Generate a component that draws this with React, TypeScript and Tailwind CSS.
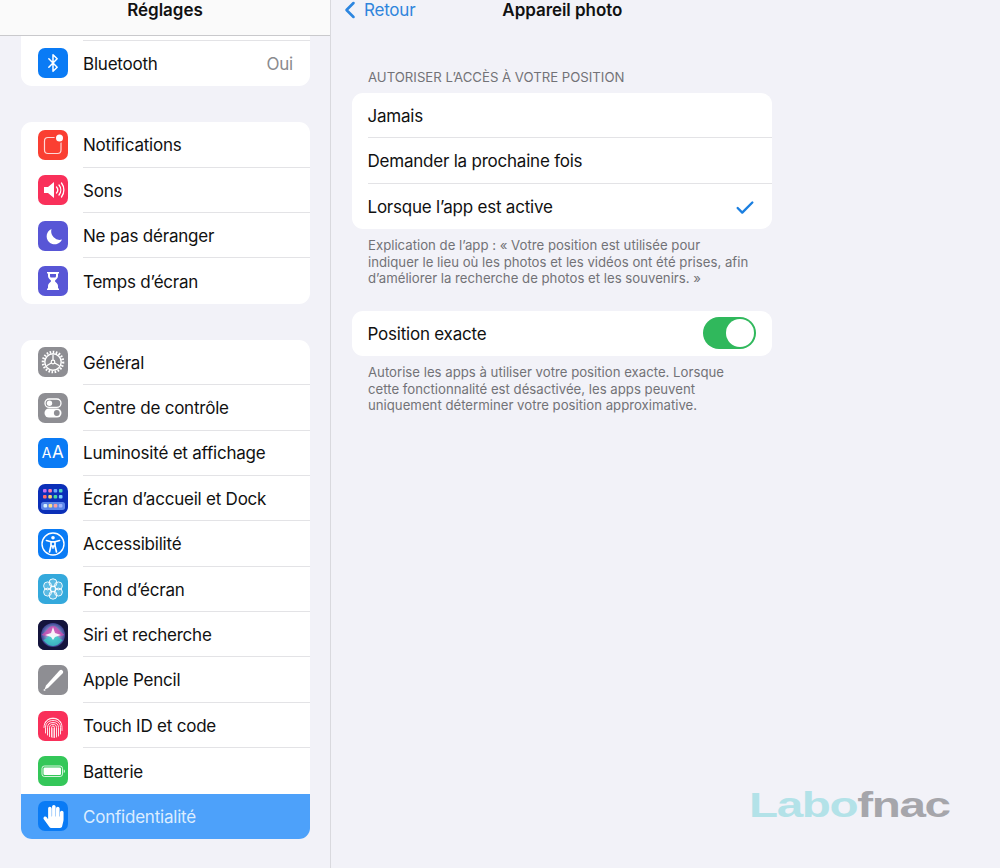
import React from "react";
import { Bluetooth, ChevronLeft, Check } from "lucide-react";
import { FaHandPaper } from "react-icons/fa";

type RowProps = {
  icon: React.ReactNode;
  bg: string;
  label: string;
  value?: string;
  last?: boolean;
  active?: boolean;
};

const NotificationIcon = () => (
  <svg viewBox="0 0 30 30" className="w-full h-full">
    <rect x="6.500" y="7.500" width="16.500" height="16" rx="3.500" fill="none" stroke="#fff" strokeOpacity="0.8" strokeWidth="1.200" />
    <circle cx="21.500" cy="8" r="5" fill="#fa3f32" />
    <circle cx="21.500" cy="8" r="3.500" fill="#fff" />
  </svg>
);

const SoundIcon = () => (
  <svg viewBox="0 0 30 30" className="w-full h-full">
    <path d="M6 12h4l6-5v16l-6-5H6z" fill="#fff" />
    <g fill="none" stroke="#fff" strokeWidth="1.300" strokeLinecap="round">
      <path d="M18.500 12a4.500 4.500 0 0 1 0 6" />
      <path d="M21 10a8 8 0 0 1 0 10" />
      <path d="M23.500 8a11.500 11.500 0 0 1 0 14" />
    </g>
  </svg>
);

const MoonIcon = () => (
  <svg viewBox="0 0 30 30" className="w-full h-full">
    <path d="M13.500 8a8 8 0 1 0 10.500 10.500A8.500 8.500 0 0 1 13.500 8z" fill="#fff" />
  </svg>
);

const HourglassIcon = () => (
  <svg viewBox="0 0 30 30" className="w-full h-full">
    <path d="M9 6h12v1.600h-1v2.600c0 2.200-2.600 3.400-3.200 4.800.6 1.400 3.200 2.600 3.200 4.800v2.600h1V24H9v-1.600h1v-2.600c0-2.200 2.600-3.400 3.200-4.800-.6-1.400-3.200-2.600-3.200-4.800V7.600H9z" fill="#fff" />
    <path d="M12 8h6v2c0 .6-.2 1-.6 1.400h-4.800C12.200 11 12 10.600 12 10z" fill="#5856d6" />
  </svg>
);

const GearIcon = () => (
  <svg viewBox="0 0 30 30" className="w-full h-full">
    <circle cx="15" cy="15" r="10" fill="none" stroke="#fff" strokeWidth="2.600" strokeDasharray="1.600 1.500" />
    <circle cx="15" cy="15" r="8.200" fill="none" stroke="#fff" strokeWidth="1.400" />
    <circle cx="15" cy="15" r="1.800" fill="none" stroke="#fff" strokeWidth="1.200" />
    <path d="M15 13V7.500M13.300 16 8.500 18.800M16.700 16 21.500 18.800" stroke="#fff" strokeWidth="1.300" />
  </svg>
);

const ToggleIcon = () => (
  <svg viewBox="0 0 30 30" className="w-full h-full">
    <rect x="7" y="6" width="16" height="8.400" rx="4.200" fill="none" stroke="#fff" strokeWidth="1.300" />
    <circle cx="11.500" cy="10.200" r="2.700" fill="#fff" />
    <rect x="6.500" y="15.500" width="17" height="9" rx="4.500" fill="#fff" />
    <circle cx="18.800" cy="20" r="2.900" fill="#8e8e93" />
  </svg>
);

const HomeIcon = () => {
  const top = ["#c56cf0", "#ff7aa8", "#6fa8ff", "#4fd6c0"];
  const mid = ["#ff6b6b", "#ffd166", "#4cd9a0", "#7fd0ff"];
  const dock = ["#d9f2ff", "#ffe08a", "#ff9d9d", "#9fb4ff"];
  return (
    <svg viewBox="0 0 30 30" className="w-full h-full">
      {top.map((c, i) => <rect key={c} x={5 + i * 5.300} y="5" width="3.600" height="3.600" rx="1" fill={c} />)}
      {mid.map((c, i) => <rect key={c} x={5 + i * 5.300} y="11" width="3.600" height="3.600" rx="1" fill={c} />)}
      <rect x="3" y="18" width="24" height="8" rx="2.500" fill="#5c86e8" />
      {dock.map((c, i) => <rect key={c} x={5.500 + i * 5.100} y="20" width="3.600" height="3.600" rx="1" fill={c} />)}
    </svg>
  );
};

const AccessIcon = () => (
  <svg viewBox="0 0 30 30" className="w-full h-full">
    <circle cx="15" cy="15" r="11" fill="none" stroke="#fff" strokeWidth="1.400" />
    <circle cx="15" cy="8.800" r="1.800" fill="#fff" />
    <path d="M8.500 11.500 13 12.800v4L11.500 23M21.500 11.500 17 12.800v4L18.500 23M13 12.800h4M13 17h4M15 17.500V19" fill="none" stroke="#fff" strokeWidth="1.700" strokeLinecap="round" strokeLinejoin="round" />
  </svg>
);

const FlowerIcon = () => (
  <svg viewBox="0 0 30 30" className="w-full h-full">
    <g fill="#fff" fillOpacity="0.2" stroke="#fff" strokeWidth="0.900">
      <circle cx="15" cy="8.800" r="4" />
      <circle cx="15" cy="21.200" r="4" />
      <circle cx="9.600" cy="11.900" r="4" />
      <circle cx="20.400" cy="11.900" r="4" />
      <circle cx="9.600" cy="18.100" r="4" />
      <circle cx="20.400" cy="18.100" r="4" />
      <circle cx="15" cy="15" r="3" />
    </g>
  </svg>
);

const SiriIcon = () => (
  <svg viewBox="0 0 30 30" className="w-full h-full">
    <defs>
      <radialGradient id="siriGlow" cx="50%" cy="50%" r="50%">
        <stop offset="0%" stopColor="#ffffff" />
        <stop offset="35%" stopColor="#a7c7e8" />
        <stop offset="100%" stopColor="#3a3f8f" />
      </radialGradient>
    </defs>
    <rect width="30" height="30" fill="#14143c" />
    <circle cx="15" cy="15" r="12" fill="url(#siriGlow)" />
    <path d="M3.500 15C9 11 11 6 15 6s6 5 11.500 9c-4.500 2-7 1-11.500 1S9 17 3.500 15z" fill="#d14bb0" fillOpacity="0.8" />
    <path d="M5 20c4-1 6-6 10-6s6 5 10 6c-3 3-6 6-10 6s-7-3-10-6z" fill="#36c9c6" fillOpacity="0.8" />
    <path d="M15 7l2 6 6 2-6 2-2 3-2-3-6-2 6-2z" fill="#fff" fillOpacity="0.9" />
  </svg>
);

const PencilIcon = () => (
  <svg viewBox="0 0 30 30" className="w-full h-full">
    <path d="M21.500 5.500c1.200-1 2.200-.8 3 0s1 1.800 0 3L10 23l-3.500 1.500L8 20.500z" fill="#fff" />
    <circle cx="6.500" cy="25" r="1" fill="#fff" fillOpacity="0.8" />
  </svg>
);

const TouchIcon = () => (
  <svg viewBox="0 0 30 30" className="w-full h-full">
    <g fill="none" stroke="#fff" strokeOpacity="0.9" strokeWidth="0.950" strokeLinecap="round">
      <path d="M7 12a9 9 0 0 1 16 0" />
      <path d="M6 16.500c0-6 4-9 9-9s9 3 9 9v3" />
      <path d="M7.500 22v-5.500c0-4.500 3.200-7 7.500-7s7.500 2.500 7.500 7V23" />
      <path d="M9.500 24v-7.500c0-3.400 2.400-5 5.500-5s5.500 1.600 5.500 5V25" />
      <path d="M11.500 25.500v-9c0-2 1.500-3.200 3.500-3.200s3.500 1.200 3.500 3.200V26" />
      <path d="M13.500 26v-9.500c0-.9.600-1.400 1.500-1.400s1.500.5 1.500 1.400V26.500" />
      <path d="M15 17v9.500" />
    </g>
  </svg>
);

const BatteryIcon = () => (
  <svg viewBox="0 0 30 30" className="w-full h-full">
    <rect x="4" y="10" width="20.500" height="10.500" rx="2.400" fill="none" stroke="#fff" strokeOpacity="0.8" strokeWidth="1" />
    <rect x="5.500" y="11.500" width="17.500" height="7.500" rx="1.300" fill="#fff" />
    <path d="M25.700 13.500c1 .3 1.300 1 1.300 1.800s-.3 1.500-1.300 1.800z" fill="#fff" fillOpacity="0.8" />
  </svg>
);

const SidebarRow = ({ icon, bg, label, value, last, active }: RowProps) => (
  <div className={`h-[45.400px] flex items-center pl-[17px] ${active ? "bg-[#4da1fa]" : ""}`}>
    <div className={`w-[30px] h-[30px] rounded-[7px] overflow-hidden flex items-center justify-center shrink-0 ${bg}`}>
      {icon}
    </div>
    <div className={`ml-[15px] flex-1 h-full flex items-center pt-[3px] pr-[17px] ${last || active ? "" : "border-b border-[#e3e3e6]"}`}>
      <span className={`flex-1 ${active ? "text-[#dcedff]" : "text-[#111]"}`}>{label}</span>
      {value && <span className="text-[#8a8a8e]">{value}</span>}
    </div>
  </div>
);

const OptionRow = ({ label, checked, last }: { label: string; checked?: boolean; last?: boolean }) => (
  <div className={`h-[45.400px] ml-[15.500px] flex items-center pt-[2.500px] pr-[16.500px] ${last ? "" : "border-b border-[#e3e3e6]"}`}>
    <span className="flex-1 text-[#111]">{label}</span>
    {checked && <Check size={22} strokeWidth={2.600} className="text-[#1b7fe0]" />}
  </div>
);

const App = () => {
  return (
    <div className="h-[868px] w-[1000px] overflow-hidden flex bg-[#f2f2f8] text-[17px] tracking-[-0.22px] font-['Inter','Liberation_Sans',sans-serif] relative">
      <aside className="w-[331px] shrink-0 border-r border-[#d9d9de] flex flex-col">
        <header className="h-[36px] shrink-0 border-b border-[#c9c9cc] bg-[#fafafa] flex justify-center">
          <h1 className="font-semibold text-[#111] text-[17px] tracking-[-0.05px] leading-[20px]">Réglages</h1>
        </header>
        <div className="flex flex-col pl-[21px] pr-[20px]">
          <section className="bg-white rounded-b-[11px] overflow-hidden">
            <div className="h-[4.800px] ml-[62px] border-b border-[#e3e3e6]"></div>
            <SidebarRow bg="bg-[#0a7bf5]" icon={<Bluetooth size={20} color="#fff" strokeWidth={1.800} />} label="Bluetooth" value="Oui" last />
          </section>
          <section className="bg-white rounded-[11px] overflow-hidden mt-[36px]">
            <SidebarRow bg="bg-[#fa3f32]" icon={<NotificationIcon />} label="Notifications" />
            <SidebarRow bg="bg-[#f9305a]" icon={<SoundIcon />} label="Sons" />
            <SidebarRow bg="bg-[#5856d6]" icon={<MoonIcon />} label="Ne pas déranger" />
            <SidebarRow bg="bg-[#5856d6]" icon={<HourglassIcon />} label="Temps d’écran" last />
          </section>
          <section className="bg-white rounded-[11px] overflow-hidden mt-[36px]">
            <SidebarRow bg="bg-[#8e8e93]" icon={<GearIcon />} label="Général" />
            <SidebarRow bg="bg-[#8e8e93]" icon={<ToggleIcon />} label="Centre de contrôle" />
            <SidebarRow bg="bg-[#0a7bf5]" icon={<span className="text-white text-[17px] font-normal tracking-[0.5px]"><span className="text-[14px]">A</span>A</span>} label="Luminosité et affichage" />
            <SidebarRow bg="bg-[#0b2fb8]" icon={<HomeIcon />} label="Écran d’accueil et Dock" />
            <SidebarRow bg="bg-[#0a7bf5]" icon={<AccessIcon />} label="Accessibilité" />
            <SidebarRow bg="bg-[#34a9dc]" icon={<FlowerIcon />} label="Fond d’écran" />
            <SidebarRow bg="bg-[#14143c]" icon={<SiriIcon />} label="Siri et recherche" />
            <SidebarRow bg="bg-[#8e8e93]" icon={<PencilIcon />} label="Apple Pencil" />
            <SidebarRow bg="bg-[#f9305a]" icon={<TouchIcon />} label="Touch ID et code" />
            <SidebarRow bg="bg-[#34c759]" icon={<BatteryIcon />} label="Batterie" last />
            <SidebarRow bg="bg-[#0a7bf5]" icon={<FaHandPaper size={23} color="#fff" />} label="Confidentialité" active />
          </section>
        </div>
      </aside>

      <main className="flex-1 flex flex-col">
        <nav className="h-[36px] shrink-0 flex items-start pl-[9px]">
          <ChevronLeft size={28} strokeWidth={2.200} className="text-[#2c86e0] -mt-[4px] -ml-[4px]" />
          <span className="text-[#2f85dc] leading-[20px]">Retour</span>
          <span className="font-semibold text-[#111] text-[17px] tracking-[-0.05px] leading-[20px] ml-[87px]">Appareil photo</span>
        </nav>
        <div className="w-[420px] ml-[21px] flex flex-col">
          <h2 className="mt-[33px] ml-[16px] text-[13.200px] tracking-normal leading-[16px] uppercase text-[#727277]">Autoriser l’accès à votre position</h2>
          <section className="mt-[8px] bg-white rounded-[11px] overflow-hidden">
            <OptionRow label="Jamais" />
            <OptionRow label="Demander la prochaine fois" />
            <OptionRow label="Lorsque l’app est active" checked last />
          </section>
          <p className="mt-[8px] ml-[16px] mr-[19px] text-[13.200px] tracking-normal leading-[16.500px] text-[#727277]">
            Explication de l’app : « Votre position est utilisée pour indiquer le lieu où les photos et les vidéos ont été prises, afin d’améliorer la recherche de photos et les souvenirs. »
          </p>
          <section className="mt-[24px] bg-white rounded-[11px] h-[45.400px] flex items-center pl-[15.500px] pr-[16px]">
            <span className="flex-1 pt-[2px] text-[#111]">Position exacte</span>
            <div className="w-[53px] h-[32px] rounded-full bg-[#30b85c] flex justify-end items-center pr-[2px]">
              <div className="w-[28px] h-[28px] rounded-full bg-white"></div>
            </div>
          </section>
          <p className="mt-[8px] ml-[16px] mr-[19px] text-[13.200px] tracking-normal leading-[16.500px] text-[#727277]">
            Autorise les apps à utiliser votre position exacte. Lorsque cette fonctionnalité est désactivée, les apps peuvent uniquement déterminer votre position approximative.
          </p>
        </div>
      </main>

      <div className="absolute left-[749px] top-[784px] flex text-[35px] leading-[42px] font-bold font-['Liberation_Sans',sans-serif] origin-left scale-x-[1.36] tracking-[-1px]">
        <span className="text-[#b3e2e8]">Labo</span>
        <span className="text-[#a6a6ab]">fnac</span>
      </div>
    </div>
  );
};

export default App;
